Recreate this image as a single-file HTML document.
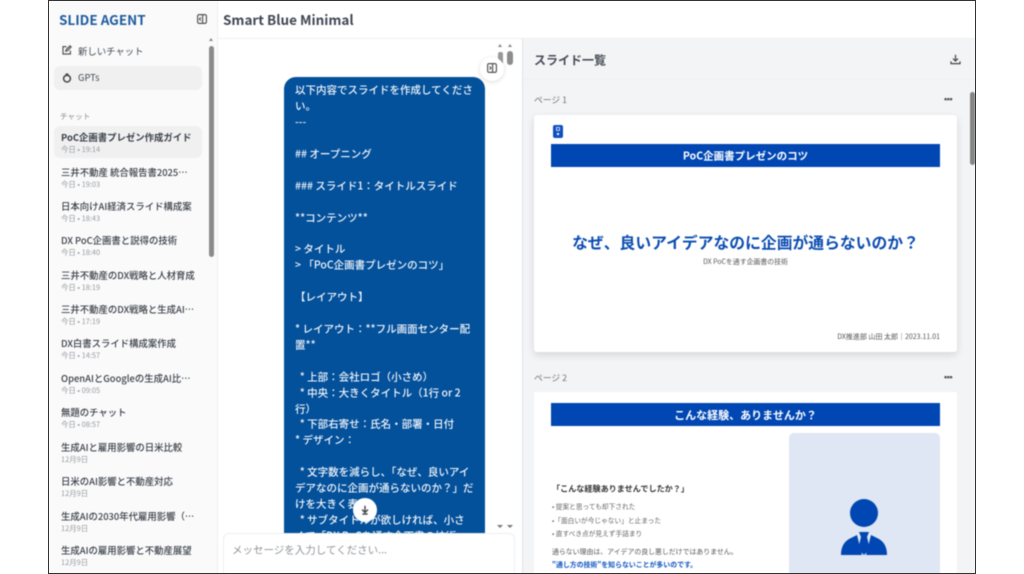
<!DOCTYPE html>
<html lang="ja"><head><meta charset="utf-8">
<style>
*{box-sizing:border-box}
html,body{margin:0;padding:0;width:1024px;height:574px;overflow:hidden;background:#fff}
body{font-family:"Noto Sans CJK JP","Liberation Sans",sans-serif;position:relative}
.a{position:absolute}
.t{position:absolute;white-space:pre;line-height:1;transform:translateY(calc(-50% + .6px))}
#app{position:absolute;left:48px;top:0;width:928px;height:574px;overflow:hidden;background:#fff;border:1px solid #333}
#w{position:absolute;left:-49px;top:-1px;width:1024px;height:574px;filter:blur(.4px)}
.h{font-size:9.4px;color:#3a4049;font-weight:500;left:61px}
.s{font-size:7.4px;color:#969aa1;left:61px}
.c{font-size:10.5px;color:#f2f6fb;left:295px;font-weight:500}
</style></head><body>
<div id="app"><div id="w">
<!-- sidebar -->
<div class="a" style="left:49px;top:0;width:169px;height:574px;background:#fafafa;border-right:1px solid #eceef0"></div>
<div class="t" style="left:59px;top:19px;font-size:13.5px;font-weight:700;color:#1f5c9e">SLIDE AGENT</div>
<svg class="a" style="left:197px;top:14px" width="10" height="10" viewBox="0 0 10 10" fill="none" stroke="#555" stroke-width="1.2"><rect x=".6" y=".6" width="8.8" height="8.8" rx="1.5"/><path d="M5.600 1v8M3.800 3.400 2.400 5l1.400 1.600"/></svg>
<svg class="a" style="left:62px;top:45px" width="10" height="10" viewBox="0 0 10 10" fill="none" stroke="#555" stroke-width="1.2"><path d="M8.400 5.600V9H1V1.600h3.600"/><path d="M3.800 6.200 4.200 4.600 8 .9l1.100 1.100-3.700 3.800z"/></svg>
<div class="t" style="left:78px;top:51px;font-size:9.4px;color:#444b54">新しいチャット</div>
<div class="a" style="left:54px;top:66px;width:148px;height:24px;border-radius:6px;background:#f0f0f1"></div>
<svg class="a" style="left:62px;top:73px" width="10" height="10" viewBox="0 0 10 10" fill="none" stroke="#444" stroke-width="1.500"><circle cx="5" cy="5.600" r="3.400"/><path d="M3.600 1.200h2.800"/></svg>
<div class="t" style="left:78px;top:77px;font-size:9.4px;color:#444b54">GPTs</div>
<div class="t" style="left:60px;top:116px;font-size:7.6px;color:#8a8e95">チャット</div>
<div class="a" style="left:54px;top:126px;width:148px;height:32px;border-radius:6px;background:#f0f0f1"></div>
<div class="t h" style="top:137px;font-weight:700">PoC企画書プレゼン作成ガイド</div><div class="t s" style="top:149px">今日 • 19:14</div>
<div class="t h" style="top:172px">三井不動産 統合報告書2025…</div><div class="t s" style="top:184px">今日 • 19:03</div>
<div class="t h" style="top:206px">日本向けAI経済スライド構成案</div><div class="t s" style="top:218px">今日 • 18:43</div>
<div class="t h" style="top:240px">DX PoC企画書と説得の技術</div><div class="t s" style="top:252px">今日 • 18:40</div>
<div class="t h" style="top:275px">三井不動産のDX戦略と人材育成</div><div class="t s" style="top:287px">今日 • 18:19</div>
<div class="t h" style="top:309px">三井不動産のDX戦略と生成AI…</div><div class="t s" style="top:321px">今日 • 17:19</div>
<div class="t h" style="top:343px">DX白書スライド構成案作成</div><div class="t s" style="top:355px">今日 • 14:57</div>
<div class="t h" style="top:378px">OpenAIとGoogleの生成AI比…</div><div class="t s" style="top:390px">今日 • 09:05</div>
<div class="t h" style="top:412px">無題のチャット</div><div class="t s" style="top:424px">今日 • 08:57</div>
<div class="t h" style="top:447px">生成AIと雇用影響の日米比較</div><div class="t s" style="top:459px">12月9日</div>
<div class="t h" style="top:481px">日米のAI影響と不動産対応</div><div class="t s" style="top:493px">12月9日</div>
<div class="t h" style="top:516px">生成AIの2030年代雇用影響（…</div><div class="t s" style="top:528px">12月9日</div>
<div class="t h" style="top:550px">生成AIの雇用影響と不動産展望</div><div class="t s" style="top:562px">12月9日</div>
<div class="a" style="left:209px;top:46px;width:5px;height:211px;border-radius:3px;background:#8b8b8b"></div>
<div class="a" style="left:209px;top:38px;width:0;height:0;border:2.5px solid transparent;border-bottom:3px solid #888;border-top:0"></div>
<!-- header -->
<div class="a" style="left:218px;top:38px;width:757px;height:1px;background:#eff0f2"></div>
<div class="t" style="left:223px;top:19px;font-size:13.5px;font-weight:700;color:#3f4854">Smart Blue Minimal</div>
<!-- chat -->
<div class="a" style="left:284px;top:77px;width:201px;height:460px;border-radius:12px 12px 0 0;background:#03509b"></div>
<div class="t c" style="top:90px">以下内容でスライドを作成してくださ</div>
<div class="t c" style="top:106px">い。</div>
<div class="t c" style="top:122px">---</div>
<div class="t c" style="top:154px">## オープニング</div>
<div class="t c" style="top:186px">### スライド1：タイトルスライド</div>
<div class="t c" style="top:218px">**コンテンツ**</div>
<div class="t c" style="top:249px">&gt; タイトル</div>
<div class="t c" style="top:265px">&gt; 「PoC企画書プレゼンのコツ」</div>
<div class="t c" style="top:297px">【レイアウト】</div>
<div class="t c" style="top:329px">* レイアウト：**フル画面センター配</div>
<div class="t c" style="top:345px">置**</div>
<div class="t c" style="top:377px">  * 上部：会社ロゴ（小さめ）</div>
<div class="t c" style="top:393px">  * 中央：大きくタイトル（1行 or 2</div>
<div class="t c" style="top:409px">行）</div>
<div class="t c" style="top:424px">  * 下部右寄せ：氏名・部署・日付</div>
<div class="t c" style="top:440px">* デザイン：</div>
<div class="t c" style="top:472px">  * 文字数を減らし、「なぜ、良いアイ</div>
<div class="t c" style="top:488px">デアなのに企画が通らないのか？」だ</div>
<div class="t c" style="top:504px">けを大きく表示</div>
<div class="t c" style="top:520px">  * サブタイトルが欲しければ、小さ</div>
<div class="t c" style="top:536px">くて「DX PoCを通す企画書の技術」</div>
<!-- chat scrollbars -->
<div class="a" style="left:498px;top:52px;width:5px;height:12px;border-radius:2px;background:#999"></div>
<div class="a" style="left:507px;top:51px;width:6px;height:14px;border-radius:3px;background:#8d8d8d"></div>
<div class="a" style="left:498px;top:44px;width:0;height:0;border:2.5px solid transparent;border-bottom:3px solid #888;border-top:0"></div>
<div class="a" style="left:508px;top:44px;width:0;height:0;border:2.5px solid transparent;border-bottom:3px solid #888;border-top:0"></div>
<div class="a" style="left:497px;top:525px;width:0;height:0;border:3px solid transparent;border-top:3.500px solid #777;border-bottom:0"></div>
<div class="a" style="left:507px;top:525px;width:0;height:0;border:3px solid transparent;border-top:3.500px solid #777;border-bottom:0"></div>
<div class="a" style="left:480px;top:57px;width:24px;height:24px;border-radius:12px;background:#fff;box-shadow:0 1px 5px rgba(0,0,0,.14)"></div>
<svg class="a" style="left:487px;top:63px" width="10" height="10" viewBox="0 0 10 10" fill="none" stroke="#555" stroke-width="1.2"><rect x=".6" y=".6" width="8.8" height="8.8" rx="1.5"/><path d="M5.600 1v8M2.600 3.400 4 5 2.600 6.600"/></svg>
<div class="a" style="left:353px;top:498px;width:24px;height:24px;border-radius:12px;background:#fff"></div>
<svg class="a" style="left:360px;top:505px" width="10" height="10" viewBox="0 0 10 10" fill="none" stroke="#444" stroke-width="1.4"><path d="M5 .8v6M2 4.600 5 7.400l3-2.800M2.400 9h5.200"/></svg>
<!-- input -->
<div class="a" style="left:223px;top:533px;width:292px;height:42px;border-radius:6px 6px 0 0;background:#fff;border:1px solid #eceef0"></div>
<div class="t" style="left:232px;top:550px;font-size:10.5px;color:#8f9399">メッセージを入力してください...</div>
<!-- right panel -->
<div class="a" style="left:522px;top:39px;width:453px;height:535px;background:#f3f4f6;border-left:1px solid #e2e3e6"></div>
<div class="a" style="left:523px;top:79px;width:452px;height:1px;background:#eeeff1"></div>
<div class="t" style="left:534px;top:60px;font-size:12px;font-weight:700;color:#464c55">スライド一覧</div>
<svg class="a" style="left:950px;top:54px" width="11" height="11" viewBox="0 0 11 11" fill="none" stroke="#444" stroke-width="1.2"><path d="M5.500 .8v6M3 4.600l2.500 2.400L8 4.600M1 7.400v2.200h9V7.400"/></svg>
<div class="t" style="left:534px;top:100px;font-size:8.8px;color:#70757c">ページ 1</div>
<div class="t" style="left:944px;top:99px;font-size:9px;font-weight:700;color:#555;letter-spacing:-.4px;font-family:'Liberation Sans',sans-serif">•••</div>
<div class="a" style="left:970px;top:92px;width:5px;height:73px;border-radius:3px;background:#858585"></div>
<!-- card 1 -->
<div class="a" style="left:534px;top:115px;width:423px;height:237px;background:#fff;border-radius:3px;box-shadow:0 3px 8px rgba(0,0,0,.12)"></div>
<div class="a" style="left:553px;top:125px;width:10px;height:13px;border-radius:2px;background:#0f4fc0"></div>
<div class="a" style="left:556px;top:127px;width:4px;height:4px;border:1px solid #bcd0f2"></div>
<div class="a" style="left:557px;top:133px;width:2px;height:2px;background:#fff"></div>
<div class="a" style="left:551px;top:144px;width:389px;height:23px;background:#0047b3"></div>
<div class="t" style="left:551px;width:389px;text-align:center;top:156px;font-size:10.5px;font-weight:700;color:#fff">PoC企画書プレゼンのコツ</div>
<div class="t" style="left:534px;width:423px;text-align:center;top:242px;font-size:15.8px;font-weight:700;color:#0a4cb0">なぜ、良いアイデアなのに企画が通らないのか？</div>
<div class="t" style="left:534px;width:423px;text-align:center;top:261px;font-size:6.9px;color:#555">DX PoCを通す企画書の技術</div>
<div class="t" style="right:84px;top:337px;font-size:7px;color:#555">DX推進部 山田 太郎｜2023.11.01</div>
<!-- page 2 -->
<div class="t" style="left:534px;top:378px;font-size:8.8px;color:#70757c">ページ 2</div>
<div class="t" style="left:944px;top:377px;font-size:9px;font-weight:700;color:#555;letter-spacing:-.4px;font-family:'Liberation Sans',sans-serif">•••</div>
<div class="a" style="left:534px;top:392px;width:423px;height:182px;background:#fff"></div>
<div class="a" style="left:551px;top:403px;width:389px;height:23px;background:#0047b3"></div>
<div class="t" style="left:551px;width:389px;text-align:center;top:415px;font-size:11px;font-weight:700;color:#fff">こんな経験、ありませんか？</div>
<div class="a" style="left:789px;top:433px;width:151px;height:141px;border-radius:5px 5px 0 0;background:#dfe6f4"></div>
<svg class="a" style="left:838px;top:496px" width="52" height="62" viewBox="0 0 52 62"><circle cx="26" cy="17" r="14" fill="#0047b3"/><path d="M3 59c0-8 3-13 8-16l8-4 5 20H5q-2 0-2 0zM49 59c0-8-3-13-8-16l-8-4-5 20h19q2 0 2 0z" fill="#0047b3"/><path d="M21 36h10l-2 5 3 12-6 6-6-6 3-12z" fill="#0047b3"/></svg>
<div class="t" style="left:552px;top:489px;font-size:8.1px;font-weight:700;color:#333">「こんな経験ありませんでしたか？」</div>
<div class="t" style="left:552px;top:506px;font-size:6.7px;color:#666">• 提案と思っても却下された</div>
<div class="t" style="left:552px;top:520px;font-size:6.7px;color:#666">•「面白いが今じゃない」と止まった</div>
<div class="t" style="left:552px;top:533px;font-size:6.7px;color:#666">• 直すべき点が見えず手詰まり</div>
<div class="t" style="left:552px;top:551px;font-size:6.9px;color:#555">通らない理由は、アイデアの良し悪しだけではありません。</div>
<div class="t" style="left:552px;top:564px;font-size:6.9px;font-weight:700;color:#0f55c0">"通し方の技術"を知らないことが多いのです。</div>
</div></div>
</body></html>
